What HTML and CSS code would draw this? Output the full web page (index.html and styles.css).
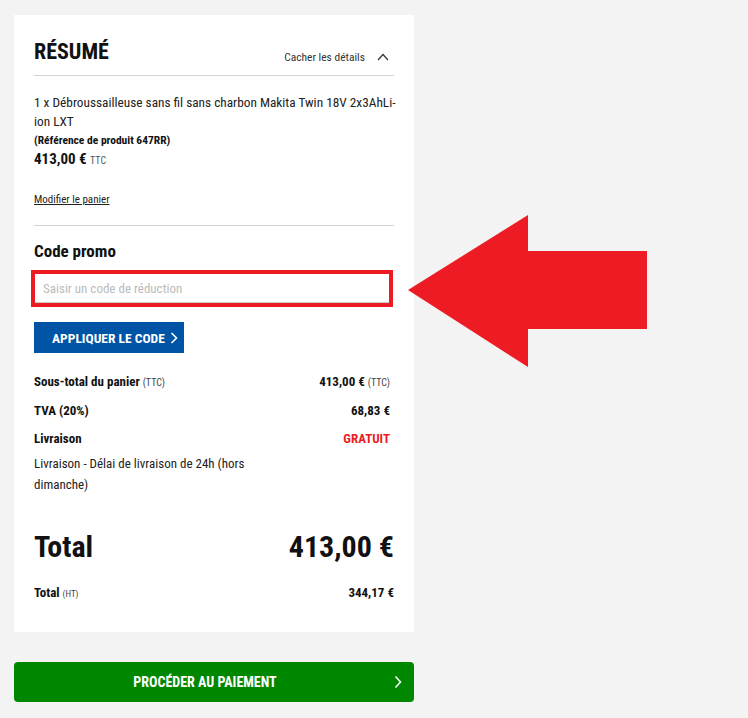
FILE: index.html
```html
<!DOCTYPE html>
<html lang="fr">
<head>
    <meta charset="UTF-8">
    <meta name="viewport" content="width=device-width, initial-scale=1.0">
    <title>Résumé du panier</title>
    <link rel="stylesheet" href="styles.css">
</head>
<body>
    <div class="page">
        <div class="summary-col">
            <div class="summary">
                <!-- Header -->
                <div class="summary-head">
                    <h2>Résumé</h2>
                    <a class="toggle">Cacher les détails
                        <svg width="12" height="8" viewBox="0 0 12 8"><path d="M1 7 L6 1.5 L11 7" fill="none" stroke="#333" stroke-width="1.2"/></svg>
                    </a>
                </div>

                <!-- Product -->
                <div class="product">
                    <p class="product-name">1 x Débroussailleuse sans fil sans charbon Makita Twin 18V 2x3AhLi-ion LXT</p>
                    <p class="product-ref">(Référence de produit 647RR)</p>
                    <p class="product-price">413,00 € <span>TTC</span></p>
                    <a class="edit-cart" href="#">Modifier le panier</a>
                </div>

                <!-- Promo -->
                <div class="promo">
                    <h3>Code promo</h3>
                    <div class="promo-mark">
                        <input type="text" placeholder="Saisir un code de réduction">
                    </div>
                    <button class="apply">APPLIQUER LE CODE
                        <svg width="8" height="12" viewBox="0 0 8 12"><path d="M1.5 1 L6.5 6 L1.5 11" fill="none" stroke="#fff" stroke-width="1.6"/></svg>
                    </button>
                </div>

                <!-- Totals -->
                <div class="lines">
                    <div class="line"><span class="label">Sous-total du panier <small>(TTC)</small></span><span class="value">413,00 € <small>(TTC)</small></span></div>
                    <div class="line"><span class="label">TVA (20%)</span><span class="value">68,83 €</span></div>
                    <div class="line"><span class="label">Livraison</span><span class="value free">GRATUIT</span></div>
                    <p class="delivery">Livraison - Délai de livraison de 24h (hors dimanche)</p>
                </div>

                <div class="grand-total">
                    <span>Total</span><span>413,00 €</span>
                </div>
                <div class="total-ht">
                    <span>Total <small>(HT)</small></span><span>344,17 €</span>
                </div>
            </div>

            <button class="checkout">PROCÉDER AU PAIEMENT
                <svg width="8" height="14" viewBox="0 0 8 14"><path d="M1.5 1.5 L6.5 7 L1.5 12.5" fill="none" stroke="#fff" stroke-width="1.6"/></svg>
            </button>
        </div>

        <!-- annotation arrow -->
        <svg class="pointer" width="240" height="154" viewBox="0 0 240 154">
            <polygon points="0,76 120,1 120,37 239,37 239,115 120,115 120,153" fill="#ed1c24"/>
        </svg>
    </div>
</body>
</html>
```

FILE: styles.css
```css
body {
    margin: 0;
    background: #f3f3f3;
    font-family: "Roboto Condensed", "Liberation Sans Narrow", Roboto, sans-serif;
    font-stretch: 75%;
    color: #111;
}

.page {
    position: relative;
    height: 718px;
    padding: 15px 14px 0;
    box-sizing: border-box;
}

.summary-col {
    width: 400px;
}

.summary {
    background: #fff;
    padding: 24px 20px 29px;
}

.summary-head {
    display: flex;
    justify-content: space-between;
    align-items: flex-end;
    border-bottom: 1px solid #d4d4d4;
    padding-bottom: 10px;
}

.summary-head h2 {
    margin: 0;
    font-size: 22px;
    font-weight: 700;
    text-transform: uppercase;
    line-height: 26px;
}

.toggle {
    font-size: 11.5px;
    color: #333;
    display: flex;
    align-items: center;
    gap: 12px;
    padding: 0 5px 1px 0;
}

.product {
    padding: 17px 0 18px;
    border-bottom: 1px solid #d4d4d4;
}

.product p {
    margin: 0;
}

.product-name {
    font-size: 13.3px;
    line-height: 19px;
    color: #222;
    margin-right: -8px !important;
}

.product-ref {
    font-size: 11.5px;
    font-weight: 700;
    line-height: 19px;
}

.product-price {
    font-size: 15px;
    font-weight: 700;
    line-height: 19px;
}

.product-price span {
    font-size: 10px;
    font-weight: 400;
    color: #555;
}

.edit-cart {
    display: inline-block;
    margin-top: 23px;
    font-size: 11px;
    color: #222;
}

.promo h3 {
    margin: 14px 0 8px;
    font-size: 17px;
    line-height: 22px;
}

.promo-mark {
    width: 362px;
    margin-left: -3px;
    border: 4px solid #ed1c24;
    box-sizing: border-box;
}

.promo-mark input {
    display: block;
    width: 100%;
    height: 29px;
    box-sizing: border-box;
    border: none;
    border-bottom: 1px solid #ccc;
    padding: 0 8px;
    font-family: inherit;
    font-stretch: inherit;
    font-size: 13px;
}

.promo-mark input::placeholder {
    color: #bbb;
}

.apply {
    margin-top: 15px;
    height: 31px;
    padding: 0 6px 0 18px;
    display: flex;
    align-items: center;
    gap: 5px;
    border: none;
    background: #0054a6;
    color: #fff;
    font-family: inherit;
    font-stretch: inherit;
    font-size: 13.5px;
    font-weight: 700;
}

.lines {
    margin-top: 15px;
}

.line {
    display: flex;
    justify-content: space-between;
    font-size: 13px;
    line-height: 28px;
    padding-right: 4px;
}

.label,
.value {
    font-weight: 700;
}

.line small {
    font-size: 10px;
    font-weight: 400;
    color: #444;
}

.value.free {
    color: #ed1c24;
}

.delivery {
    margin: 0;
    width: 260px;
    font-size: 13px;
    line-height: 21px;
    color: #222;
}

.grand-total {
    display: flex;
    justify-content: space-between;
    margin-top: 32px;
    font-size: 30px;
    font-weight: 700;
    line-height: 40px;
}

.total-ht {
    display: flex;
    justify-content: space-between;
    margin-top: 17px;
    font-size: 13px;
    font-weight: 700;
    line-height: 18px;
}

.total-ht small {
    font-size: 9px;
    font-weight: 400;
    color: #444;
}

.checkout {
    position: relative;
    width: 400px;
    height: 40px;
    margin-top: 30px;
    padding: 0 18px 0 0;
    border: none;
    border-radius: 4px;
    background: #008700;
    color: #fff;
    font-family: inherit;
    font-stretch: inherit;
    font-size: 14px;
    font-weight: 700;
}

.checkout svg {
    position: absolute;
    right: 12px;
    top: 13px;
}

.pointer {
    position: absolute;
    left: 408px;
    top: 214px;
}
```
